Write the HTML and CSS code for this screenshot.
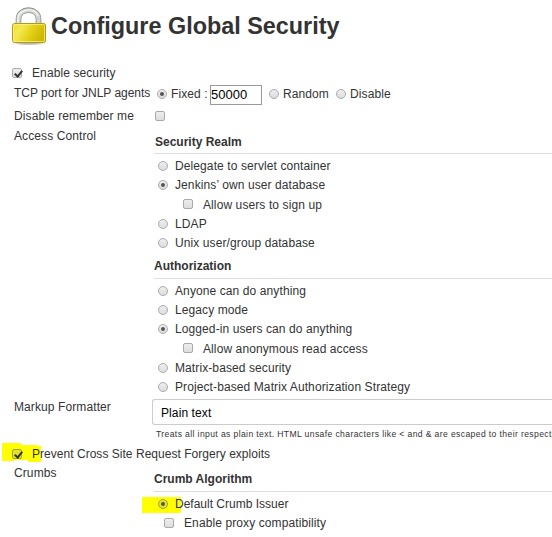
FILE: index.html
```html
<!DOCTYPE html>
<html lang="en">
<head>
<meta charset="utf-8">
<title>Configure Global Security</title>
<link rel="stylesheet" href="styles.css">
</head>
<body>
<main>
  <header class="header">
    <svg class="lock" width="36" height="40" viewBox="0 0 36 40">
      <defs>
        <linearGradient id="gold" x1="0" y1="0" x2="1" y2=".35"><stop offset="0" stop-color="#eedc32"/><stop offset=".3" stop-color="#f5e954"/><stop offset=".6" stop-color="#e6d41c"/><stop offset="1" stop-color="#cdb900"/></linearGradient>
        <radialGradient id="shade"><stop offset=".5" stop-color="#888" stop-opacity=".6"/><stop offset="1" stop-color="#888" stop-opacity="0"/></radialGradient>
      </defs>
      <ellipse cx="18" cy="37" rx="17" ry="2.500" fill="url(#shade)"/>
      <path d="M7.500 19V13C7.500 1.200 27.500 1.200 27.500 13V19" fill="none" stroke="#8b8e88" stroke-width="5.600"/>
      <path d="M7.500 19V13C7.500 1.200 27.500 1.200 27.500 13V19" fill="none" stroke="#d3d5d0" stroke-width="4"/>
      <path d="M6.800 18V13C7 2 25 1 27 10" fill="none" stroke="#f2f3f0" stroke-width="1.400"/>
      <rect x="1.500" y="17.500" width="33" height="19" rx="2" fill="url(#gold)" stroke="#b69b12"/>
      <rect x="2.500" y="18.500" width="31" height="17" rx="1" fill="none" stroke="#fff48c" stroke-opacity=".7"/>
    </svg>
    <h1>Configure Global Security</h1>
  </header>
  <div class="toggle"><i class="check on"></i><span>Enable security</span></div>
  <div class="row tcp">
    <span class="label">TCP port for JNLP agents</span>
    <div class="ports"><i class="radio on"></i><span class="fixed">Fixed :</span><input type="text" value="50000"><i class="radio"></i><span class="random">Random</span><i class="radio"></i><span>Disable</span></div>
  </div>
  <div class="row remember"><span class="label">Disable remember me</span><i class="check"></i></div>
  <div class="row access">
    <span class="label">Access Control</span>
    <div class="content">
      <h2 class="realm">Security Realm</h2>
      <div class="option"><i class="radio"></i><span>Delegate to servlet container</span></div>
      <div class="option"><i class="radio on"></i><span>Jenkins’ own user database</span></div>
      <div class="option nested"><i class="check"></i><span>Allow users to sign up</span></div>
      <div class="option"><i class="radio"></i><span>LDAP</span></div>
      <div class="option"><i class="radio"></i><span>Unix user/group database</span></div>
      <h2 class="authorization">Authorization</h2>
      <div class="option"><i class="radio"></i><span>Anyone can do anything</span></div>
      <div class="option"><i class="radio"></i><span>Legacy mode</span></div>
      <div class="option"><i class="radio on"></i><span>Logged-in users can do anything</span></div>
      <div class="option nested"><i class="check"></i><span>Allow anonymous read access</span></div>
      <div class="option"><i class="radio"></i><span>Matrix-based security</span></div>
      <div class="option"><i class="radio"></i><span>Project-based Matrix Authorization Strategy</span></div>
    </div>
  </div>
  <div class="row markup">
    <span class="label">Markup Formatter</span>
    <div class="formatter">
      <div class="select">Plain text</div>
      <div class="help">Treats all input as plain text. HTML unsafe characters like &lt; and &amp; are escaped to their respect</div>
    </div>
  </div>
  <div class="toggle prevent">
    <svg class="marker" width="39" height="20" viewBox="0 0 39 20"><path d="M0 0H19V2H33L39 3V19H26V17H12V18H0Z" fill="#ff0"/></svg>
    <i class="check on"></i><span>Prevent Cross Site Request Forgery exploits</span>
  </div>
  <div class="row crumbs">
    <span class="label">Crumbs</span>
    <div class="content">
      <h2 class="algorithm">Crumb Algorithm</h2>
      <div class="option issuer"><svg class="marker" width="39" height="16"><path d="M0 0H39V16H0Z" fill="#ff0"/></svg><i class="radio on"></i><span>Default Crumb Issuer</span></div>
      <div class="option proxy"><i class="check"></i><span>Enable proxy compatibility</span></div>
    </div>
  </div>
</main>
</body>
</html>
```
FILE: styles.css
```css
* { box-sizing: border-box; }
body {
  margin: 0;
  width: 552px;
  height: 537px;
  overflow: hidden;
  background: #fff;
  color: #333;
  font: 12px/19px "Liberation Sans", Arial, sans-serif;
  letter-spacing: .1px;
}
h1, h2 { margin: 0; font-weight: bold; letter-spacing: 0; }
.header { height: 63px; padding: 6px 0 0 11px; display: flex; align-items: flex-start; }
.lock { flex: none; }
h1 { margin-left: 4px; font-size: 23.4px; line-height: 40px; white-space: nowrap; }
.toggle { position: relative; height: 21px; padding-left: 12px; display: flex; align-items: center; }
.toggle span { margin-left: 10px; }
.row { display: flex; padding-left: 14px; }
.label { flex: none; width: 140px; line-height: 19px; white-space: nowrap; }
.tcp { height: 21px; }
.tcp .label { letter-spacing: -.03px; }
.ports { display: flex; align-items: center; margin-left: 3px; white-space: nowrap; }
.ports span { margin-left: 4px; }
.ports .fixed { width: 39px; }
.ports .random { width: 53px; }
.ports input {
  width: 52px;
  height: 20px;
  margin: 0 7px 0 0;
  padding: 0;
  border: 1px solid #999;
  border-radius: 0;
  background: #fff;
  color: #000;
  font: 13px "Liberation Sans", Arial, sans-serif;
}
.remember { height: 21px; align-items: center; margin-top: 1px; }
.remember .check { margin-left: 1px; }
.access { height: 271px; }
.content { flex: 1; min-width: 0; }
h2 { height: 22px; line-height: 19px; font-size: 12px; border-bottom: 1px solid #ddd; }
.realm { margin: 6px 0 3px; padding: 0 1px; height: 21px; }
.authorization { margin: 4px 0 3px; }
.option { position: relative; height: 19px; padding-left: 4px; display: flex; align-items: center; white-space: nowrap; }
.option span { margin-left: 7px; position: relative; }
.nested { height: 20px; padding-left: 29px; }
.nested span { margin-left: 10px; }
.check, .radio { position: relative; top: -1px; flex: none; width: 10px; height: 10px; border: 1px solid #aaa; background: linear-gradient(#eee, #ddd); }
.check { border-radius: 2px; }
.radio { border-radius: 50%; }
.radio.on::after { content: ""; position: absolute; inset: 2px; border-radius: 50%; background: #555; }
.check.on::after { content: ""; position: absolute; left: 3px; top: 0; width: 3px; height: 6px; border: solid #333; border-width: 0 2px 2px 0; transform: rotate(40deg); }
.formatter { flex: 1; min-width: 0; margin-left: -2px; }
.markup { height: 47px; }
.select { height: 26px; margin-top: 1px; padding-left: 8px; border: 1px solid #ccc; border-right: 0; border-radius: 3px 0 0 3px; color: #000; line-height: 26px; }
.help { margin-left: 4px; font-size: 8.6px; line-height: 18px; letter-spacing: .38px; white-space: nowrap; }
.prevent { height: 19px; letter-spacing: .03px; }
.marker { position: absolute; left: 2px; top: -2px; }
.prevent .marker + .check, .issuer .radio { background: #e2e22b; border-color: #a4a42a; }
.prevent span { position: relative; }
.algorithm { margin: 6px 0 3px; }
.issuer { letter-spacing: 0; }
.issuer .marker { left: -12px; top: 2px; }
.proxy { padding-left: 10px; }
.proxy span { margin-left: 10px; }
```
